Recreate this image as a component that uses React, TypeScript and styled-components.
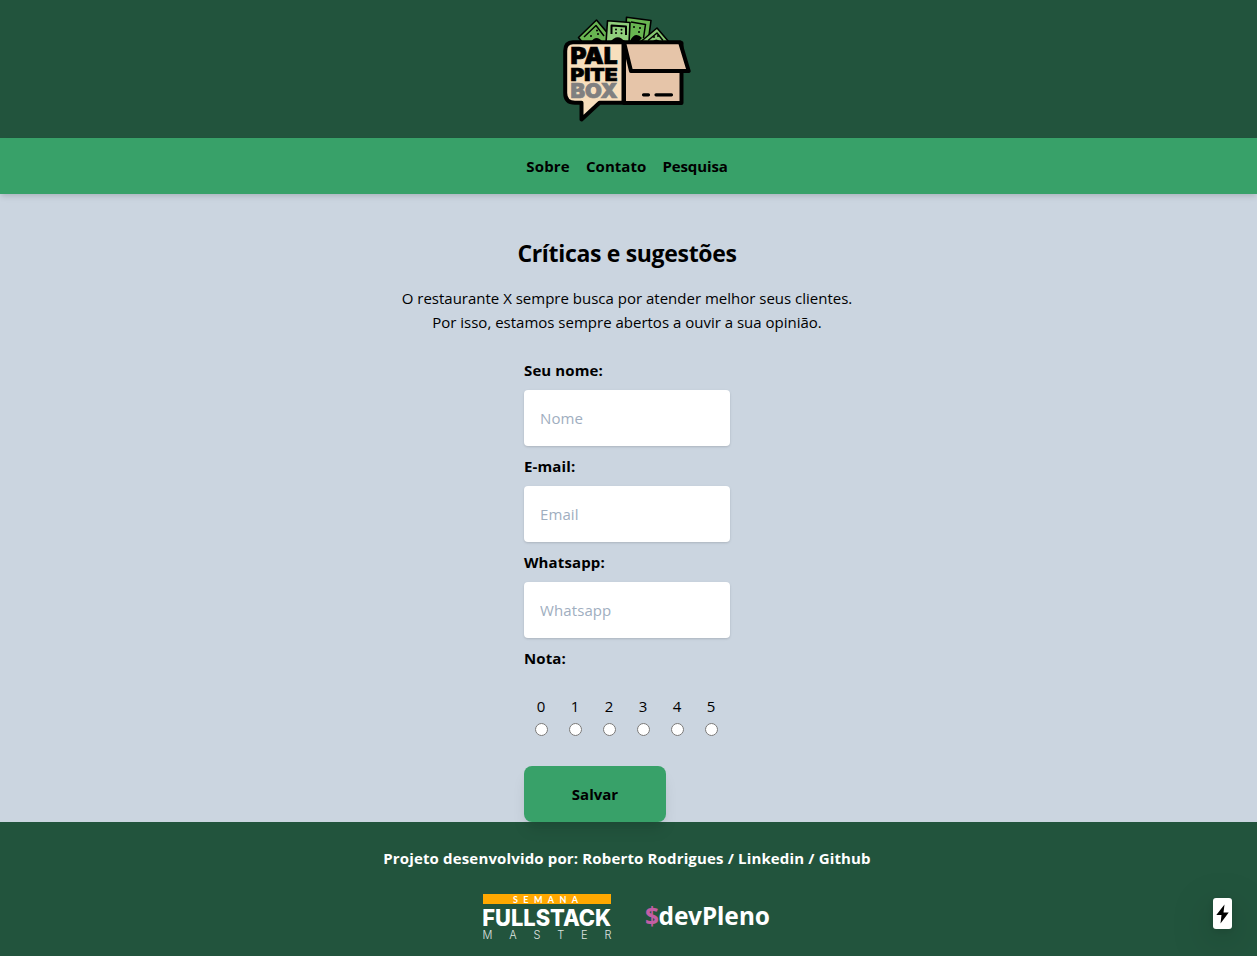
import React from 'react';
import styled, { createGlobalStyle } from 'styled-components';

const GlobalStyle = createGlobalStyle`
  *, *::before, *::after { box-sizing: border-box; }
  html { background: #cbd5e0; }
  body {
    margin: 0;
    background: #cbd5e0;
    color: #000;
    font-family: "Open Sans", "Noto Sans", sans-serif;
    font-size: 15px;
    line-height: 24px;
  }
  h1, p { margin: 0; }
`;

const Page = styled.div`
  min-height: 956px;
  display: flex;
  flex-direction: column;
`;

const Header = styled.header`
  height: 138px;
  padding: 16px 3px 16px 0;
  display: flex;
  justify-content: center;
  background: #22543d;
`;

const Nav = styled.nav`
  height: 56px;
  padding-right: 3px;
  display: flex;
  align-items: center;
  justify-content: center;
  gap: 16px;
  background: #38a169;
  box-shadow: 0 4px 6px -1px rgba(0, 0, 0, 0.1), 0 2px 4px -1px rgba(0, 0, 0, 0.06);
`;

const NavLink = styled.a<{ $spacing: number }>`
  font-weight: 700;
  letter-spacing: ${(p) => p.$spacing}px;
  color: #000;
`;

const Main = styled.main`
  padding: 43px 3px 0 0;
  display: flex;
  flex-direction: column;
  align-items: center;
`;

const Title = styled.h1`
  font-size: 23px;
  line-height: 32px;
  font-weight: 700;
  letter-spacing: -0.32px;
`;

const Intro = styled.p`
  margin-top: 17px;
  text-align: center;
`;

const Form = styled.form`
  width: 206px;
  margin-top: 24px;
  display: flex;
  flex-direction: column;
`;

const Label = styled.label`
  font-weight: 700;
  letter-spacing: 0.12px;
`;

const Field = styled.input`
  width: 206px;
  height: 56px;
  margin: 8px 0;
  padding: 16px;
  border: 0;
  border-radius: 4px;
  background: #fff;
  font: inherit;
  letter-spacing: 0.1px;
  box-shadow: 0 1px 3px 0 rgba(0, 0, 0, 0.1), 0 1px 2px 0 rgba(0, 0, 0, 0.06);
  &::placeholder { color: #a0aec0; opacity: 1; }
`;

const Ratings = styled.div`
  margin-top: 24px;
  display: flex;
`;

const Rating = styled.label`
  width: 34px;
  display: flex;
  flex-direction: column;
  align-items: center;
  input { width: 13px; height: 13px; margin: 5px 0 0; }
`;

const SaveButton = styled.button`
  width: 142px;
  height: 56px;
  margin-top: 30px;
  border: 0;
  border-radius: 8px;
  background: #38a169;
  color: #000;
  font: inherit;
  font-weight: 700;
  position: relative;
  box-shadow: 0 10px 15px -3px rgba(0, 0, 0, 0.1), 0 4px 6px -2px rgba(0, 0, 0, 0.05);
`;

const Footer = styled.footer`
  flex: 1;
  padding: 24px 3px 0 0;
  display: flex;
  flex-direction: column;
  align-items: center;
  background: #22543d;
`;

const Credits = styled.p`
  color: #fff;
  font-weight: 700;
  letter-spacing: 0.15px;
`;

const Sponsors = styled.div`
  margin-top: 24px;
  display: flex;
  gap: 33px;
`;

const Badge = styled.div`
  position: fixed;
  right: 25px;
  bottom: 27px;
  width: 19px;
  height: 31px;
  display: flex;
  align-items: center;
  justify-content: center;
  border-radius: 3px;
  background: #fff;
  box-shadow: 0 11px 40px 0 rgba(0, 0, 0, 0.25), 0 2px 10px 0 rgba(0, 0, 0, 0.12);
`;

const BoxLogo = () => (
  <svg width="128" height="107" viewBox="0 0 128 107">
    <g stroke="#000" strokeWidth="1.6" strokeLinejoin="round">
      <path d="M15.500 21.500 33.500 4 47 20 42 27H20Z" fill="#68b551" />
      <path d="M21 21 33 9.500 41 20" fill="none" strokeWidth="1.500" />
      <path d="M63.500 1.200 88 4.500 85 27H62Z" fill="#68b551" />
      <path d="M68 6 82.500 8.500 80.500 22" fill="none" strokeWidth="1.500" />
      <path d="M78 25.500 94 12 106 26H78Z" fill="#84c76f" />
      <path d="M85 24.500 94 17 100 24.500" fill="none" strokeWidth="1.500" />
      <path d="M44.500 4.800 67 6.500 66 27H43Z" fill="#90ce7c" />
      <path d="M48.500 18V9.500L63 10.500V19" fill="none" strokeWidth="2" />
    </g>
    <g fill="#000">
      <path d="M47 26Q55 16.500 62 26ZM28 26Q33 18 40 26ZM67 25Q72 15 79 22L76 25ZM89 26Q93 21 98 26Z" />
      <circle cx="53" cy="13.500" r="1" /><circle cx="58.500" cy="13.800" r="1" />
      <circle cx="53" cy="17" r="1" /><circle cx="58.500" cy="17.200" r="1" />
      <circle cx="28" cy="20" r="1" /><circle cx="34" cy="14.500" r="1" />
      <circle cx="35" cy="18" r="1" /><circle cx="71" cy="11" r="1" />
      <circle cx="77" cy="12" r="1" /><circle cx="76" cy="16" r="1" />
      <circle cx="91" cy="21" r="1" /><circle cx="95" cy="20" r="1" />
    </g>
    <path d="M61 27H118.500V87H61Z" fill="#e6c5a9" stroke="#000" strokeWidth="4" strokeLinejoin="round" />
    <path d="M10 26.200H60.500V86.800H36.500L18.500 103.500V86.800H12Q2.200 86.800 2.200 77V35Q2.200 26.200 10 26.200Z" fill="#f8dfbd" stroke="#000" strokeWidth="4" strokeLinejoin="round" />
    <path d="M61 26.200H117L125.700 55H68Z" fill="#e6c5a9" stroke="#000" strokeWidth="4" strokeLinejoin="round" />
    <path d="M80.500 78.800H85.500M93 78.800H108.500" stroke="#000" strokeWidth="3.200" strokeLinecap="round" />
    <g fontFamily="Inter, sans-serif" fontWeight="900" strokeWidth="0.700">
      <text x="7.500" y="48" fontSize="22.500" textLength="47" lengthAdjust="spacingAndGlyphs" fill="#000" stroke="#000">PAL</text>
      <text x="7.500" y="64.500" fontSize="18" textLength="47" lengthAdjust="spacingAndGlyphs" fill="#000" stroke="#000">PITE</text>
      <text x="7.500" y="82" fontSize="20" textLength="47" lengthAdjust="spacingAndGlyphs" fill="#808080" stroke="#808080">BOX</text>
    </g>
  </svg>
);

const FullstackLogo = () => (
  <svg width="129" height="47" viewBox="0 0 129 47" fill="#fff">
    <rect x="0" y="0" width="128" height="10" fill="#ffa800" />
    <text x="30" y="8.500" fontFamily="Lato, sans-serif" fontSize="9" fontWeight="700" textLength="65">SEMANA</text>
    <text x="-0.800" y="31.500" fontFamily="Inter, sans-serif" fontSize="22.500" fontWeight="800" textLength="129" lengthAdjust="spacingAndGlyphs">FULLSTACK</text>
    <text x="-0.500" y="45" fontFamily="Inter, sans-serif" fontSize="11" fontWeight="300" textLength="129" opacity="0.85">MASTER</text>
  </svg>
);

const DevPlenoLogo = () => (
  <svg width="127" height="47" viewBox="0 0 127 47" fontFamily="'Noto Sans', sans-serif" fontWeight="700">
    <text x="0" y="30.500" fontSize="25.500" textLength="14" lengthAdjust="spacingAndGlyphs" fill="#c35ea5">$</text>
    <text x="13.500" y="30.500" fontSize="25" textLength="111.500" lengthAdjust="spacingAndGlyphs" fill="#fff">devPleno</text>
  </svg>
);

const fields = [
  { label: 'Seu nome:', placeholder: 'Nome' },
  { label: 'E-mail:', placeholder: 'Email' },
  { label: 'Whatsapp:', placeholder: 'Whatsapp' },
];

export default function App() {
  return (
    <Page>
      <GlobalStyle />
      <Header><BoxLogo /></Header>
      <Nav>
        <NavLink $spacing={0.2}>Sobre</NavLink>
        <NavLink $spacing={0.05}>Contato</NavLink>
        <NavLink $spacing={-0.1}>Pesquisa</NavLink>
      </Nav>
      <Main>
        <Title>Críticas e sugestões</Title>
        <Intro>
          O restaurante X sempre busca por atender melhor seus clientes.
          <br />
          Por isso, estamos sempre abertos a ouvir a sua opinião.
        </Intro>
        <Form>
          {fields.map((f) => (
            <React.Fragment key={f.label}>
              <Label>{f.label}</Label>
              <Field placeholder={f.placeholder} />
            </React.Fragment>
          ))}
          <Label>Nota:</Label>
          <Ratings>
            {[0, 1, 2, 3, 4, 5].map((n) => (
              <Rating key={n}>
                {n}
                <input type="radio" name="nota" value={n} />
              </Rating>
            ))}
          </Ratings>
          <SaveButton type="button">Salvar</SaveButton>
        </Form>
      </Main>
      <Footer>
        <Credits>Projeto desenvolvido por: Roberto Rodrigues / Linkedin / Github</Credits>
        <Sponsors>
          <FullstackLogo />
          <DevPlenoLogo />
        </Sponsors>
      </Footer>
      <Badge>
        <svg width="13" height="20" viewBox="0 0 13 20">
          <path d="M8.500 0.500 0.300 11H5.500L4.500 19.500 12.700 8.500H7.500Z" fill="#000" />
        </svg>
      </Badge>
    </Page>
  );
}
